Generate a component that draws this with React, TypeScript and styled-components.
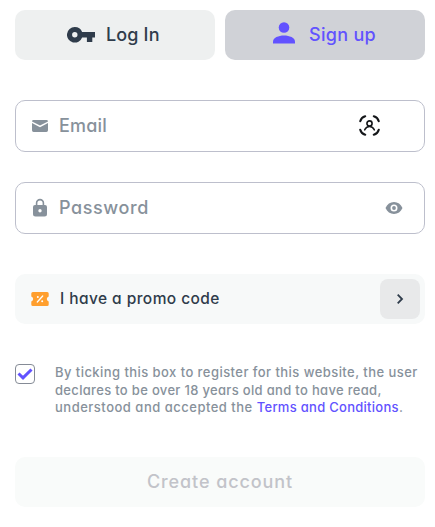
import React from "react";
import styled, { createGlobalStyle } from "styled-components";

const GlobalStyle = createGlobalStyle`
  *, *::before, *::after { box-sizing: border-box; }
  body { margin: 0; background: #fff; }
  button, input { font: inherit; letter-spacing: inherit; font-feature-settings: inherit; }
`;

const Form = styled.form`
  width: 435px;
  height: 527px;
  padding: 10px 10px 0 15px;
  display: flex;
  flex-direction: column;
  font-family: Inter, "Liberation Sans", sans-serif;
  font-feature-settings: "cv11";
  font-weight: 500;
  color: #2f3c4b;
`;

const Tabs = styled.div`
  display: grid;
  grid-template-columns: 1fr 1fr;
  gap: 10px;
  margin-bottom: 40px;
`;

const Tab = styled.button<{ $active?: boolean }>`
  height: 50px;
  border: 0;
  border-radius: 10px;
  padding: 0 0 0 ${(p) => (p.$active ? 48 : 52)}px;
  display: flex;
  align-items: center;
  gap: ${(p) => (p.$active ? 14 : 11)}px;
  background: ${(p) => (p.$active ? "#d0d2d7" : "#eef0f0")};
  color: ${(p) => (p.$active ? "#6252ff" : "#2f3c4b")};
`;

const Label = styled.span<{ $size: number; $spacing?: number }>`
  font-size: ${(p) => p.$size}px;
  letter-spacing: ${(p) => p.$spacing ?? 0}px;
  line-height: 24px;
  white-space: nowrap;
`;

const UserIcon = styled.svg`
  margin-bottom: 4px;
`;

const Field = styled.label<{ $gap: number }>`
  height: 52px;
  margin-bottom: ${(p) => p.$gap}px;
  border: 1px solid #bdbfcc;
  border-radius: 10px;
  padding: 0 21px 1px 16px;
  display: flex;
  align-items: center;
  gap: 11px;
  color: #87919b;
`;

const Input = styled.input<{ $spacing: number }>`
  flex: 1;
  min-width: 0;
  border: 0;
  padding: 0;
  outline: 0;
  background: transparent;
  font-size: 18px;
  letter-spacing: ${(p) => p.$spacing}px;
  &::placeholder { color: #87919b; opacity: 1; }
`;

const AutofillIcon = styled.svg`
  margin-right: 23px;
  color: #15171a;
`;

const Promo = styled.div`
  height: 50px;
  margin-bottom: 40px;
  padding: 0 5px 0 16px;
  border-radius: 10px;
  background: #f7f9f9;
  display: flex;
  align-items: center;
  gap: 11px;
`;

const Arrow = styled.button`
  width: 40px;
  height: 40px;
  margin-left: auto;
  padding: 0;
  border: 0;
  border-radius: 8px;
  background: #e8e9ea;
  color: #2f3c4b;
  display: grid;
  place-items: center;
`;

const Terms = styled.div`
  height: 53px;
  margin-bottom: 40px;
  display: flex;
  gap: 20px;
`;

const Check = styled.span`
  flex: none;
  width: 20px;
  height: 20px;
  border: 1px solid #858b96;
  border-radius: 4px;
  display: grid;
  place-items: center;
`;

const Copy = styled.p`
  margin: 0;
  font-size: 13px;
  line-height: 17.5px;
  color: #87919b;
`;

const Line = styled.span<{ $spacing: number }>`
  display: block;
  white-space: nowrap;
  letter-spacing: ${(p) => p.$spacing}px;
`;

const Link = styled.a`
  color: #6252ff;
  letter-spacing: 0.28px;
`;

const Submit = styled.button`
  height: 50px;
  border: 0;
  border-radius: 10px;
  background: #f9fbfa;
  color: #c2c3c9;
`;

export default function App() {
  return (
    <>
      <GlobalStyle />
      <Form onSubmit={(e) => e.preventDefault()}>
        <Tabs>
          <Tab type="button">
            <svg width="28" height="16" viewBox="0 0 28 16" fill="currentColor">
              <path fillRule="evenodd" d="M7.800 0a7.800 7.800 0 1 0 7.300 10.400h4.800V15h5.400v-4.600H28V5H15.100A7.800 7.800 0 0 0 7.800 0Zm0 5a2.700 2.700 0 1 1 0 5.400 2.700 2.700 0 0 1 0-5.400Z" />
            </svg>
            <Label $size={18} $spacing={0.15}>Log In</Label>
          </Tab>
          <Tab type="button" $active>
            <UserIcon width="22" height="22" viewBox="0 0 22 22" fill="currentColor">
              <circle cx="11" cy="5.500" r="5.300" />
              <path d="M0 21.500v-2C0 15.700 5.500 13.500 11 13.500s11 2.200 11 6v2Z" />
            </UserIcon>
            <Label $size={18} $spacing={0.3}>Sign up</Label>
          </Tab>
        </Tabs>

        <Field $gap={30}>
          <svg width="16" height="13" viewBox="0 0 16 13" fill="currentColor">
            <path d="M1.500 1h13A1.500 1.500 0 0 1 16 2.400L8 6.400 0 2.400A1.500 1.500 0 0 1 1.500 1Z" />
            <path d="M0 4 8 8.200 16 4v7.300a1.600 1.600 0 0 1-1.600 1.600H1.600A1.600 1.600 0 0 1 0 11.300Z" />
          </svg>
          <Input type="email" placeholder="Email" aria-label="Email" $spacing={0.2} />
          <AutofillIcon width="21" height="21" viewBox="0 0 22 22" fill="none" stroke="currentColor" strokeWidth="2.200" strokeLinecap="round">
            <path d="M1.300 6.500C2 3.800 3.800 2 6.500 1.300M15.500 1.300C18.200 2 20 3.800 20.700 6.500M20.700 15.500C20 18.200 18.200 20 15.500 20.700M6.500 20.700C3.800 20 2 18.200 1.300 15.500" />
            <circle cx="11" cy="8.900" r="2.700" strokeWidth="1.700" />
            <path d="M6 15.500c1-2.400 2.600-3.500 5-3.500s4 1.100 5 3.500" strokeWidth="1.700" />
          </AutofillIcon>
        </Field>

        <Field $gap={40}>
          <svg width="16" height="19" viewBox="0 0 16 19" fill="currentColor">
            <path d="M4.600 8V5a3.400 3.400 0 0 1 6.800 0v3" fill="none" stroke="currentColor" strokeWidth="1.600" />
            <path fillRule="evenodd" d="M3 7h10a2 2 0 0 1 2 2v7a2.500 2.500 0 0 1-2.500 2.500h-9A2.500 2.500 0 0 1 1 16V9a2 2 0 0 1 2-2Zm5 4a1.700 1.700 0 1 0 0 3.400A1.700 1.700 0 0 0 8 11Z" />
          </svg>
          <Input type="password" placeholder="Password" aria-label="Password" $spacing={0.6} />
          <svg width="18" height="12" viewBox="0 0 18 12" fill="currentColor">
            <path fillRule="evenodd" d="M9 0C5.200 0 2.200 2.200.5 6c1.700 3.800 4.700 6 8.500 6s6.800-2.200 8.500-6C15.800 2.200 12.800 0 9 0Zm0 2.500a3.500 3.500 0 1 1 0 7 3.500 3.500 0 0 1 0-7Z" />
            <circle cx="9" cy="6" r="1.900" />
          </svg>
        </Field>

        <Promo>
          <svg width="18" height="14" viewBox="0 0 18 14">
            <path fill="#ff9f2e" d="M1.800 0h14.400A1.500 1.500 0 0 1 17.700 1.500v3a2.600 2.600 0 0 0 0 5v3a1.500 1.500 0 0 1-1.500 1.500H1.800A1.500 1.500 0 0 1 .3 12.500v-3a2.600 2.600 0 0 0 0-5v-3A1.500 1.500 0 0 1 1.800 0Z" />
            <path d="m11.700 4-5.400 6" stroke="#fff" strokeWidth="1.300" strokeLinecap="round" />
            <circle cx="6.800" cy="5" r="1" fill="#fff" />
            <circle cx="11.200" cy="9.200" r="1" fill="#fff" />
          </svg>
          <Label $size={15.5} $spacing={0.43}>I have a promo code</Label>
          <Arrow type="button" aria-label="Promo code">
            <svg width="8" height="12" viewBox="0 0 8 12" fill="none" stroke="currentColor" strokeWidth="1.800">
              <path d="m1.700 1.700 4.300 4.300-4.300 4.300" />
            </svg>
          </Arrow>
        </Promo>

        <Terms>
          <Check role="checkbox" aria-checked="true">
            <svg width="16" height="12" viewBox="0 0 16 12" fill="none" stroke="#6252ff" strokeWidth="3">
              <path d="m1.500 5.500 4.500 4.300L14.500 1.500" />
            </svg>
          </Check>
          <Copy>
            <Line $spacing={0.44}>By ticking this box to register for this website, the user</Line>
            <Line $spacing={0.32}>declares to be over 18 years old and to have read,</Line>
            <Line $spacing={0.5}>understood and accepted the <Link>Terms and Conditions</Link>.</Line>
          </Copy>
        </Terms>

        <Submit type="submit" disabled>
          <Label $size={18} $spacing={0.9}>Create account</Label>
        </Submit>
      </Form>
    </>
  );
}
